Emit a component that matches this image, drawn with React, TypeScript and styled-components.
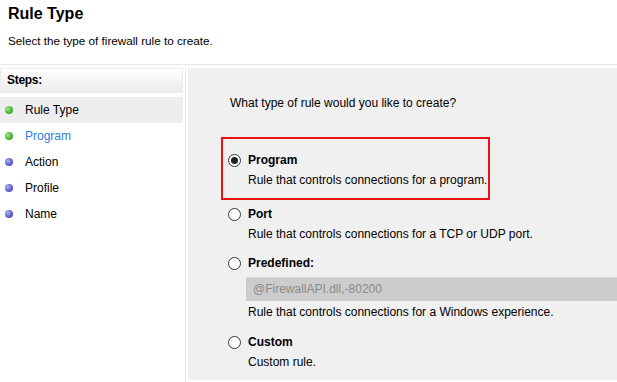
import React from "react";
import styled, { createGlobalStyle } from "styled-components";

const Global = createGlobalStyle`
  html, body { margin: 0; padding: 0; background: #ffffff; }
  body { font-family: "Liberation Sans", Arial, sans-serif; color: #000; width: 617px; height: 382px; overflow: hidden; }
`;

const Page = styled.div`
  width: 617px;
  height: 382px;
  display: flex;
  flex-direction: column;
  background: #fff;
`;

const Header = styled.div`
  height: 65px;
  box-sizing: border-box;
  padding: 4px 0 0 8px;
  border-bottom: 1px solid #e6e6e6;
`;

const Title = styled.div`
  font-size: 16px;
  font-weight: bold;
  line-height: 20px;
  color: #000;
`;

const Subtitle = styled.div`
  margin-top: 10px;
  font-size: 11.7px;
  line-height: 14px;
  color: #000;
`;

const Body = styled.div`
  flex: 1;
  display: flex;
  padding-top: 3px;
  gap: 2px;
`;

const Sidebar = styled.div`
  width: 185px;
  border-right: 1px solid #e8e8e8;
  display: flex;
  flex-direction: column;
`;

const StepsHeader = styled.div`
  height: 25px;
  margin-right: 2px;
  box-sizing: border-box;
  border: 1px solid #ececec;
  background: linear-gradient(#ffffff, #ececec);
  padding-left: 6px;
  font-size: 12px;
  font-weight: bold;
  line-height: 23px;
  letter-spacing: -0.3px;
`;

const StepList = styled.div`
  margin-top: 4px;
  display: flex;
  flex-direction: column;
`;

const Step = styled.div<{ $active?: boolean; $current?: boolean }>`
  height: 26px;
  margin-right: 2px;
  display: flex;
  align-items: center;
  gap: 12px;
  padding-left: 5px;
  font-size: 12px;
  color: ${(p) => (p.$current ? "#2a80dc" : "#000")};
  background: ${(p) => (p.$active ? "#eeeeee" : "transparent")};
`;

const Bullet = styled.span<{ $done?: boolean }>`
  width: 8px;
  height: 8px;
  border-radius: 50%;
  background: ${(p) =>
    p.$done
      ? "radial-gradient(circle at 35% 35%, #9be886, #45b531 60%, #2e8f20)"
      : "radial-gradient(circle at 35% 35%, #b0b0f2, #5a5acc 60%, #4040a8)"};
`;

const Main = styled.div`
  flex: 1;
  background: #f0f0f0;
  padding: 27px 0 0 33px;
  display: flex;
  flex-direction: column;
  margin-bottom: 2px;
`;

const Question = styled.div`
  margin-left: 9px;
  font-size: 12px;
  line-height: 16px;
  color: #000;
`;

const Options = styled.div`
  margin-top: 26px;
  display: flex;
  flex-direction: column;
`;

const Option = styled.div<{ $highlight?: boolean; $space?: number }>`
  display: flex;
  flex-direction: column;
  box-sizing: border-box;
  margin-top: ${(p) => p.$space ?? 0}px;
  ${(p) =>
    p.$highlight
      ? `
    width: 269px;
    height: 63px;
    border: 2px solid #ee1111;
    padding: 13px 0 0 5px;
  `
      : `
    padding-left: 7px;
  `}
`;

const OptionRow = styled.div`
  display: flex;
  align-items: center;
  height: 16px;
  gap: 7px;
`;

const Radio = styled.span<{ $checked?: boolean }>`
  width: 13px;
  height: 13px;
  box-sizing: border-box;
  border-radius: 50%;
  border: 1px solid #333;
  background: #fff;
  display: flex;
  align-items: center;
  justify-content: center;
  &::after {
    content: "";
    display: ${(p) => (p.$checked ? "block" : "none")};
    width: 7px;
    height: 7px;
    border-radius: 50%;
    background: #222;
  }
`;

const OptionLabel = styled.span`
  font-size: 12px;
  font-weight: bold;
  line-height: 16px;
  color: #000;
`;

const Desc = styled.div<{ $space?: number }>`
  margin-left: 20px;
  margin-top: ${(p) => p.$space ?? 4}px;
  font-size: 12px;
  line-height: 16px;
  white-space: nowrap;
  color: #000;
`;

const Combo = styled.div`
  margin-left: 18px;
  margin-top: 6px;
  height: 24px;
  box-sizing: border-box;
  background: #cccccc;
  border-top: 1px solid #dcdcdc;
  padding-left: 7px;
  font-size: 12px;
  line-height: 22px;
  color: #8a8a8a;
`;

type Opt = {
  label: string;
  desc: string;
  checked?: boolean;
  highlight?: boolean;
  combo?: string;
  space: number;
};

const options: Opt[] = [
  { label: "Program", desc: "Rule that controls connections for a program.", checked: true, highlight: true, space: 0 },
  { label: "Port", desc: "Rule that controls connections for a TCP or UDP port.", space: 6 },
  { label: "Predefined:", desc: "Rule that controls connections for a Windows experience.", combo: "@FirewallAPI.dll,-80200", space: 13 },
  { label: "Custom", desc: "Custom rule.", space: 14 },
];

const steps = [
  { name: "Rule Type", done: true, active: true },
  { name: "Program", done: true, current: true },
  { name: "Action" },
  { name: "Profile" },
  { name: "Name" },
];

export default function App() {
  return (
    <Page>
      <Global />
      <Header>
        <Title>Rule Type</Title>
        <Subtitle>Select the type of firewall rule to create.</Subtitle>
      </Header>
      <Body>
        <Sidebar>
          <StepsHeader>Steps:</StepsHeader>
          <StepList>
            {steps.map((s) => (
              <Step key={s.name} $active={s.active} $current={s.current}>
                <Bullet $done={s.done} />
                {s.name}
              </Step>
            ))}
          </StepList>
        </Sidebar>
        <Main>
          <Question>What type of rule would you like to create?</Question>
          <Options>
            {options.map((o) => (
              <Option key={o.label} $highlight={o.highlight} $space={o.space}>
                <OptionRow>
                  <Radio $checked={o.checked} />
                  <OptionLabel>{o.label}</OptionLabel>
                </OptionRow>
                {o.combo && <Combo>{o.combo}</Combo>}
                <Desc $space={o.combo ? 3 : 4}>{o.desc}</Desc>
              </Option>
            ))}
          </Options>
        </Main>
      </Body>
    </Page>
  );
}
